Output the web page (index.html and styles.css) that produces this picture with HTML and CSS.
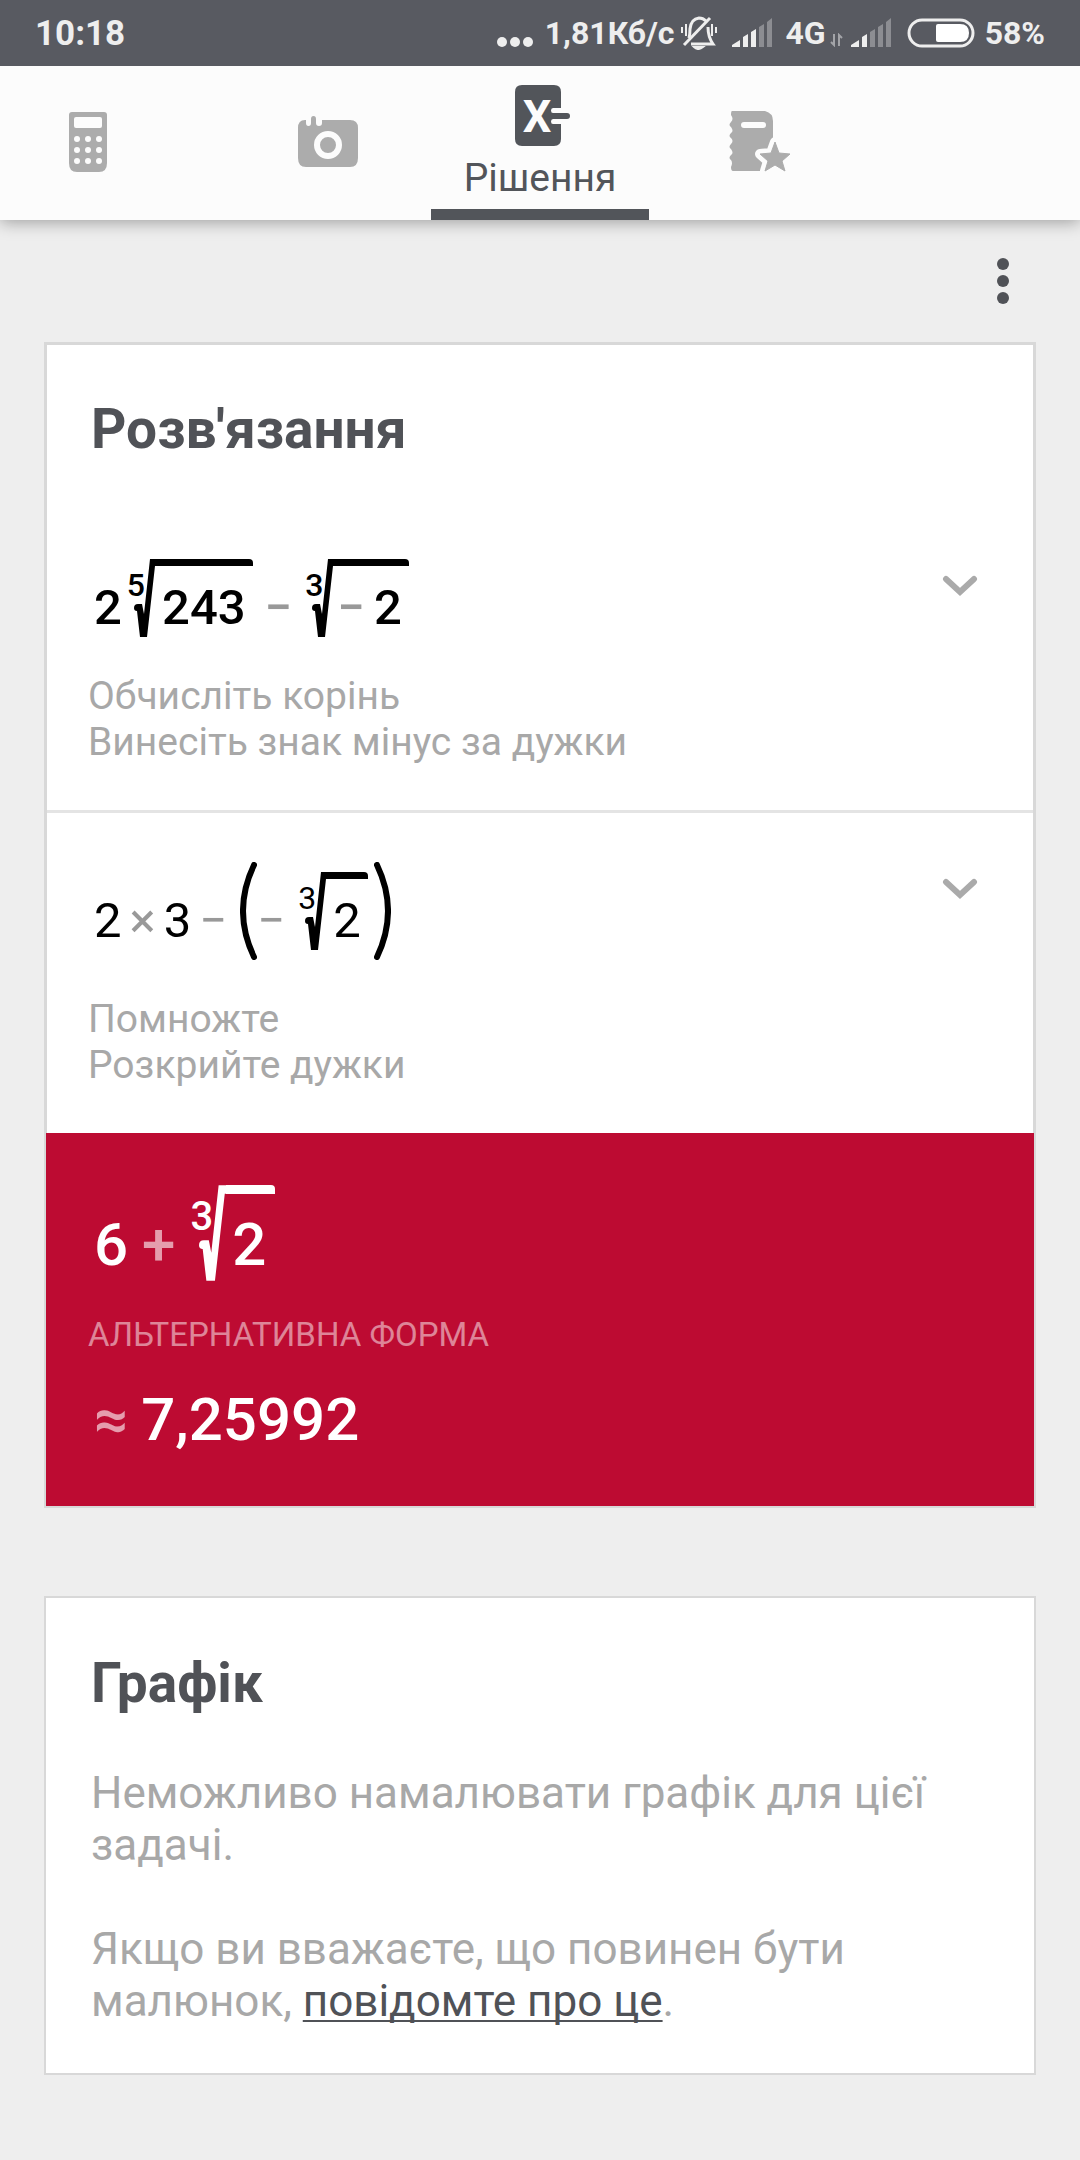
FILE: index.html
```html
<!DOCTYPE html>
<html lang="uk">
<head>
  <meta charset="UTF-8">
  <title>Рішення</title>
  <meta name="viewport" content="width=device-width, initial-scale=1.0">
  <link rel="stylesheet" href="styles.css">
</head>
<body>
  <!-- shared shapes -->
  <svg class="defs" aria-hidden="true">
    <symbol id="radical" viewBox="0 0 22 78">
      <path d="M0 49 Q0 45 4 45 H8 L10 55 L16 0 H22 V7 H21 L13 78 H6 L3 52 Q0 52 0 49z"/>
    </symbol>
    <symbol id="chevron" viewBox="0 0 36 24">
      <path d="M4 5 L18 18 L32 5" fill="none" stroke="#aaa" stroke-width="6" stroke-linecap="round"/>
    </symbol>
  </svg>

  <div class="statusbar">
    <span class="clock">10:18</span>
    <div class="status-right">
      <svg class="dots" width="36" height="12" viewBox="0 0 36 12" fill="#eee"><circle cx="5" cy="6" r="5"/><circle cx="18" cy="6" r="5"/><circle cx="31" cy="6" r="5"/></svg>
      <span class="speed">1,81Кб/с</span>
      <svg class="bell" width="36" height="34" viewBox="0 0 36 34" fill="none" stroke="#eee" stroke-width="2">
        <path d="M8 22 Q9 18 9 13 Q10 3 18 2 Q22 2 25 5 M27 11 Q27 21 32 28 H10" stroke-width="3"/>
        <path d="M29 2 L3 29" stroke-width="3"/>
        <path d="M1 11 V17 M5 8 V20 M35 11 V17 M31 8 V20"/>
        <path d="M13 31 H22 Q17 35 13 31z" fill="#eee"/>
      </svg>
      <svg class="signal" width="41" height="30" viewBox="0 0 41 30" fill="#eee">
        <path d="M0 29 V27 L8 22 V29z M11 29 V19 L16 16 V29z M19 29 V14 L24 11 V29z"/>
        <path d="M27 29 V9 L32 6 V29z M35 29 V4 L40 0 V29z" opacity=".35"/>
      </svg>
      <span class="net">4G</span>
      <svg class="arrows" width="13" height="14" viewBox="0 0 13 14" fill="none" stroke="#a3a4a8" stroke-width="2"><path d="M4 1 V12 L1 9 M9 13 V2 L12 5"/></svg>
      <svg class="signal" width="41" height="30" viewBox="0 0 41 30" fill="#eee">
        <path d="M0 29 V27 L8 22 V29z M11 29 V19 L16 16 V29z"/>
        <path d="M19 29 V14 L24 11 V29z M27 29 V9 L32 6 V29z M35 29 V4 L40 0 V29z" opacity=".35"/>
      </svg>
      <svg class="battery" width="68" height="30" viewBox="0 0 68 30">
        <rect x="2" y="2" width="64" height="26" rx="13" fill="none" stroke="#eee" stroke-width="3"/>
        <path d="M31 6 H53 Q62 6 62 15 Q62 24 53 24 H31 Q29 24 29 22 V8 Q29 6 31 6z" fill="#fff"/>
      </svg>
      <span class="percent">58%</span>
    </div>
  </div>

  <nav class="tabs">
    <button class="tab tab-first" type="button" aria-label="Калькулятор">
      <svg width="38" height="60" viewBox="0 0 38 60">
        <path d="M3 0 H35 Q38 0 38 3 V51 Q38 60 30 60 H8 Q0 60 0 51 V3 Q0 0 3 0z" fill="#acacac"/>
        <rect x="5" y="5" width="28" height="11" rx="2" fill="#fcfcfc"/>
        <g fill="#fcfcfc">
          <circle cx="8" cy="27" r="3"/><circle cx="19" cy="27" r="3"/><circle cx="30" cy="27" r="3"/>
          <circle cx="8" cy="38" r="3"/><circle cx="19" cy="38" r="3"/><circle cx="30" cy="38" r="3"/>
          <circle cx="8" cy="49" r="3"/><circle cx="19" cy="49" r="3"/><circle cx="30" cy="49" r="3"/>
        </g>
      </svg>
    </button>
    <button class="tab" type="button" aria-label="Камера">
      <svg width="62" height="52" viewBox="0 0 62 52">
        <path d="M8 4 H9 V7 Q9 10 11.500 10 Q14 10 14 7 V3 Q14 0 16.500 0 Q19 0 19 3 V7 Q19 10 22 10 Q25 10 25 7 V4 H53 Q61 4 61 12 V42 Q61 51 53 51 H9 Q1 51 1 42 V12 Q1 4 8 4z" fill="#acacac"/>
        <circle cx="31" cy="29" r="11" fill="none" stroke="#fcfcfc" stroke-width="6"/>
      </svg>
    </button>
    <button class="tab tab-active" type="button">
      <svg width="56" height="62" viewBox="0 0 56 62">
        <path d="M7 0 H39 Q46 0 46 7 V23 H38 Q36 23 36 25.500 Q36 28 38 28 H52 Q55 28 55 31 Q55 34 52 34 H38 Q36 34 36 36.500 Q36 39 38 39 H46 V54 Q46 61 39 61 H7 Q0 61 0 54 V7 Q0 0 7 0z" fill="#52555a"/>
        <text class="icon-x" x="22" y="47" text-anchor="middle">X</text>
      </svg>
      <span>Рішення</span>
    </button>
    <button class="tab" type="button" aria-label="Блокнот">
      <svg width="64" height="62" viewBox="0 0 64 62">
        <path d="M4 0 H37 Q45 2 45 10 V40 L33 60 H5 Q3 60 3 56 Q5 52 3 49 Q0 47 3 44 Q6 42 3 38 Q0 36 3 33 Q6 30 3 27 Q0 25 3 22 Q6 20 3 16 Q0 14 3 11 Q6 8 3 4 Q3 0 4 0z" fill="#acacac"/>
        <rect x="13" y="11" width="25" height="6" rx="3" fill="#fcfcfc"/>
        <path d="M47 31 L51 42 L62 43 L54 50 L57 60 L47 54 L37 60 L40 50 L32 43 L43 42z" fill="#acacac" stroke="#fcfcfc" stroke-width="10" stroke-linejoin="round"/>
        <path d="M47 31 L51 42 L62 43 L54 50 L57 60 L47 54 L37 60 L40 50 L32 43 L43 42z" fill="#acacac" stroke="#acacac" stroke-linejoin="round"/>
      </svg>
    </button>
  </nav>

  <main>
    <div class="toolbar">
      <button class="more-btn" type="button" aria-label="Меню">
        <svg width="12" height="46" viewBox="0 0 12 46" fill="#505257"><circle cx="6" cy="6" r="6"/><circle cx="6" cy="23" r="6"/><circle cx="6" cy="40" r="6"/></svg>
      </button>
    </div>

    <section class="card">
      <h2>Розв'язання</h2>

      <div class="step step-first">
        <div class="step-body">
          <div class="math math-bold">
            <span class="num">2</span>
            <span class="root"><span class="index">5</span><svg class="radical"><use href="#radical"/></svg><span class="radicand">243</span></span>
            <span class="op op-wide">−</span>
            <span class="root"><span class="index">3</span><svg class="radical"><use href="#radical"/></svg><span class="radicand"><span class="op op-neg">−</span>2</span></span>
          </div>
          <p>Обчисліть корінь<br>Винесіть знак мінус за дужки</p>
        </div>
        <button class="expand-btn" type="button" aria-label="Розгорнути"><svg width="36" height="24"><use href="#chevron"/></svg></button>
      </div>

      <div class="step">
        <div class="step-body">
          <div class="math">
            <span class="num">2</span>
            <span class="op">×</span>
            <span class="num">3</span>
            <span class="op">−</span>
            <svg class="paren paren-open" width="17" height="98" viewBox="0 0 17 98"><path d="M14 3 Q-8 49 14 95"/></svg>
            <span class="op">−</span>
            <span class="root"><span class="index">3</span><svg class="radical"><use href="#radical"/></svg><span class="radicand">2</span></span>
            <svg class="paren paren-close" width="17" height="98" viewBox="0 0 17 98"><path d="M3 3 Q25 49 3 95"/></svg>
          </div>
          <p>Помножте<br>Розкрийте дужки</p>
        </div>
        <button class="expand-btn" type="button" aria-label="Розгорнути"><svg width="36" height="24"><use href="#chevron"/></svg></button>
      </div>

      <div class="result">
        <div class="math math-bold math-large">
          <span class="num">6</span>
          <span class="op">+</span>
          <span class="root"><span class="index">3</span><svg class="radical"><use href="#radical"/></svg><span class="radicand">2</span></span>
        </div>
        <div class="result-label">АЛЬТЕРНАТИВНА ФОРМА</div>
        <div class="approx"><span class="op">≈</span><span>7,25992</span></div>
      </div>
    </section>

    <section class="card card-graph">
      <h2>Графік</h2>
      <p>Неможливо намалювати графік для цієї задачі.</p>
      <p>Якщо ви вважаєте, що повинен бути малюнок, <a href="#report">повідомте про це</a>.</p>
    </section>
  </main>
</body>
</html>
```
FILE: styles.css
```css
* {
  box-sizing: border-box;
}
body {
  margin: 0;
  min-height: 100vh;
  background: #eee;
  font-family: Roboto, "Noto Sans", sans-serif;
  color: #505257;
}
button {
  border: none;
  background: none;
  padding: 0;
  font: inherit;
  color: inherit;
  cursor: pointer;
}
svg {
  display: block;
  flex: none;
}
.defs {
  position: absolute;
  width: 0;
  height: 0;
}

/* Status bar */
.statusbar {
  display: flex;
  align-items: center;
  justify-content: space-between;
  height: 66px;
  padding: 0 35px;
  background: #585a61;
  color: #eee;
  font-size: 32px;
  font-weight: 700;
  position: relative;
  z-index: 1;
}
.clock {
  font-size: 35px;
}
.status-right {
  display: flex;
  align-items: center;
}
.dots {
  margin: 18px 12px 0 0;
}
.bell {
  margin: 0 15px 0 7px;
}
.net {
  margin-left: 12px;
}
.arrows {
  margin: 14px 8px 0 4px;
}
.battery {
  margin: 0 10px 0 15px;
}

/* Tabs */
.tabs {
  display: grid;
  grid-template-columns: 225fr 206fr 218fr 222fr 209fr;
  height: 154px;
  background: #fcfcfc;
  box-shadow: 0 2px 16px rgba(0,0,0,0.35);
  position: relative;
}
.tab {
  display: flex;
  flex-direction: column;
  align-items: center;
  justify-content: center;
  padding-bottom: 2px;
}
.tab-first {
  padding-right: 50px;
}
.tab-active {
  padding: 10px 0 0;
  border-bottom: 11px solid #52555a;
  font-size: 39px;
  line-height: 46px;
  color: #52555a;
}
.tab-active svg {
  margin-left: 6px;
}
.tab-active span {
  margin-top: 8px;
}
.icon-x {
  font-size: 45px;
  font-weight: 700;
  fill: #fcfcfc;
}

/* Cards */
main {
  padding: 0 44px 86px;
}
.toolbar {
  display: flex;
  justify-content: flex-end;
  align-items: center;
  height: 122px;
  padding-right: 27px;
}
.card {
  background: #fff;
  border: 3px solid #d8d8d8;
  margin-bottom: 88px;
}
h2 {
  margin: 0;
  padding: 52px 44px 0;
  font-size: 55px;
  line-height: 64px;
  font-weight: 700;
}
.step {
  display: flex;
  justify-content: space-between;
  align-items: flex-start;
  padding: 49px 55px 45px 41px;
  border-top: 3px solid #e4e4e4;
}
.step-first {
  padding-top: 98px;
  border-top: none;
}
.step p {
  margin: 36px 0 0;
  font-size: 39px;
  line-height: 46px;
  color: #a8a8a8;
}
.expand-btn {
  margin-top: 15px;
}

/* Expressions */
.math {
  display: flex;
  align-items: center;
  padding-left: 6px;
  font-size: 49px;
  line-height: 58px;
  color: #000;
}
.math-bold {
  font-weight: 500;
}
.num, .math > .op {
  padding-top: 20px;
}
.op {
  color: #999;
}
.math > .op {
  margin: 0 8px;
}
.math > .op-wide {
  margin: 0 8px 0 12px;
}
.op-neg {
  margin: 0 9px 0 -3px;
}
.root {
  display: flex;
  margin-left: 5px;
}
.index {
  padding-top: 10px;
  margin-right: -11px;
  font-size: 32px;
  line-height: 32px;
}
.radical {
  width: 22px;
  height: 78px;
  fill: currentColor;
}
.radicand {
  padding: 13px 7px 0 6px;
  border-top: 7px solid;
  border-top-right-radius: 4px;
}
.paren {
  fill: none;
  stroke: #000;
  stroke-width: 6;
  stroke-linecap: round;
}
.paren-open {
  margin: 0 -8px 0 5px;
}
.paren-close {
  margin-left: 6px;
}

/* Result */
.result {
  margin: 0 -1px -1px;
  padding: 52px 42px 50px;
  background: #bd0b32;
  color: #fff;
}
.result .op {
  color: rgba(255,255,255,0.6);
}
.math-large, .approx {
  font-size: 60px;
  line-height: 72px;
  font-weight: 500;
  color: #fff;
}
.math-large .num, .math-large > .op {
  padding-top: 24px;
}
.math-large > .op {
  margin: 0 10px 0 14px;
}
.math-large .index {
  font-size: 40px;
  line-height: 40px;
  padding-top: 12px;
  margin-right: -14px;
}
.math-large .radical {
  width: 27px;
  height: 96px;
}
.math-large .radicand {
  padding: 15px 9px 0 6px;
  border-top-width: 9px;
}
.result-label {
  margin-top: 34px;
  font-size: 33px;
  line-height: 40px;
  color: rgba(255,255,255,0.5);
}
.approx {
  display: flex;
  margin-top: 29px;
  padding-left: 6px;
  gap: 13px;
}

/* Graph card */
.card-graph {
  border-width: 2px;
  margin-bottom: 0;
}
.card-graph h2 {
  padding: 53px 45px 0;
}
.card-graph p {
  margin: 52px 45px 51px;
  font-size: 44px;
  line-height: 52px;
  color: #a8a8a8;
}
.card-graph p:last-child {
  margin-bottom: 46px;
}
.card-graph a {
  color: #505257;
  text-decoration-thickness: 2px;
  text-underline-offset: 4px;
  text-decoration-skip-ink: none;
}
```
